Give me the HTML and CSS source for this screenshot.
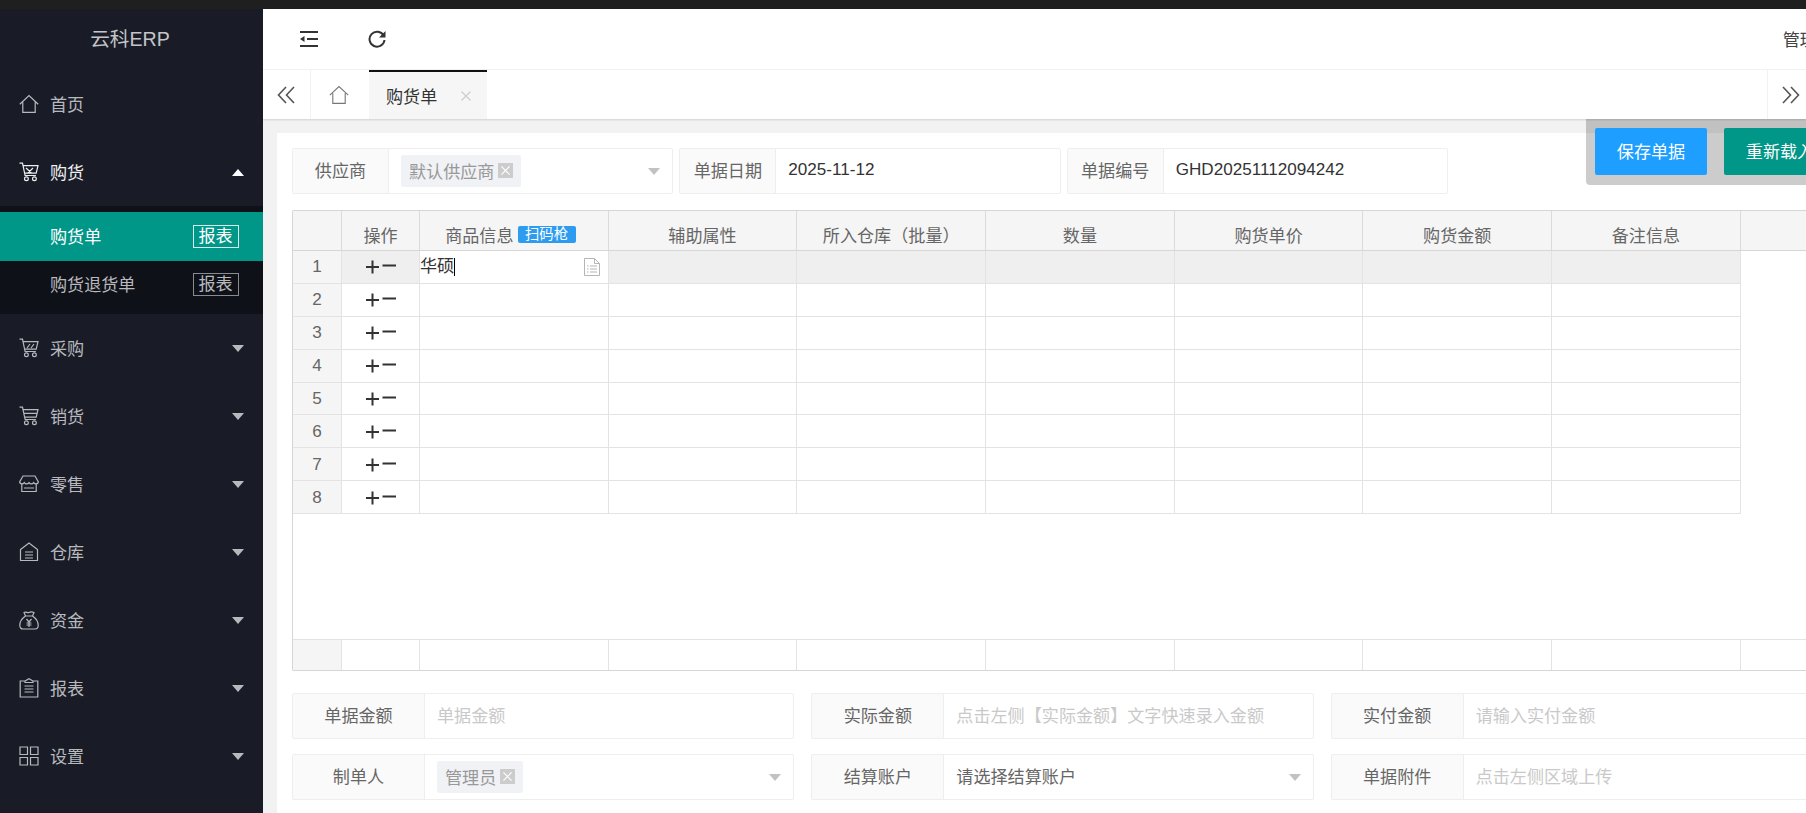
FILE: index.html
```html
<!DOCTYPE html>
<html lang="zh-CN">
<head>
<meta charset="utf-8">
<title>云科ERP</title>
<link rel="stylesheet" href="styles.css">
</head>
<body>
<svg class="sprite" xmlns="http://www.w3.org/2000/svg">
  <symbol id="i-home" viewBox="0 0 20 20"><path d="M.8 10.2 10 1.6l9.2 8.6M3.8 8.2V18.4h3.4M16.2 8.2V18.4h-3.4M7 18.4h6"/></symbol>
  <symbol id="i-cart1" viewBox="0 0 20 20"><path d="M.5 1.2h3l2.6 12.3h10.800M4 3.600h15l-1.800 7.600H5.600M7 6l5.500 5M14 6l-5 5"/><circle cx="7.4" cy="16.8" r="1.9"/><circle cx="15.4" cy="16.8" r="1.9"/></symbol>
  <symbol id="i-cart2" viewBox="0 0 20 20"><path d="M.5 1.2h3l2.6 12.3h10.800M4 3.600h15l-1.800 7.600H5.600M8 10l3-4M12 10l3-4"/><circle cx="7.4" cy="16.8" r="1.9"/><circle cx="15.4" cy="16.8" r="1.9"/></symbol>
  <symbol id="i-cart3" viewBox="0 0 20 20"><path d="M.5 1.2h3l2.6 12.3h10.800M4 3.600h15l-1.800 7.600H5.600M5 7.400h13"/><circle cx="7.4" cy="16.8" r="1.9"/><circle cx="15.4" cy="16.8" r="1.9"/></symbol>
  <symbol id="i-shop" viewBox="0 0 20 20"><path d="M4 2h12l3.400 6c-.6 2.400-3.400 2.400-4.700.6-1.200 1.800-3.500 1.800-4.700 0-1.200 1.800-3.500 1.800-4.700 0C4 10.400 1.200 10.400.6 8zM2.800 10.500V17.500H17.200V10.500M5 14h10"/></symbol>
  <symbol id="i-store" viewBox="0 0 20 20"><path d="M1.500 7.500 10 1l8.500 6.500V18.500H1.500zM6 10h8M6 13h8M6 16h8"/></symbol>
  <symbol id="i-bag" viewBox="0 0 20 20"><path d="M6.500 6 5 2.500c2-1.200 3.500.8 5 0 1.500-.8 3-.8 5 0L13.500 6c3 2 5.700 6 5.700 9.500 0 2-1.200 3.500-3.200 3.500H4c-2 0-3.200-1.500-3.200-3.500C.8 12 3.500 8 6.500 6zM6.500 6h7M7.500 9l2.500 3 2.500-3M10 12v5M7.500 13h5M7.500 15h5"/></symbol>
  <symbol id="i-clip" viewBox="0 0 20 20"><path d="M6 3H1.200V19H18.800V3H14M6 3 10 .8 14 3v1.500H6zM5.500 8h9M5.500 11h9M5.500 14h9"/></symbol>
  <symbol id="i-grid" viewBox="0 0 20 20"><path d="M1 1h7.500v7.500H1zM11.500 1H19v7.500h-7.500zM1 11.500h7.500V19H1zM11.500 11.500H19V19h-7.500z"/></symbol>
  <symbol id="i-plus" viewBox="0 0 30 14"><path d="M0 7h13M6.500 .5v13M16.500 5.500h13.500"/></symbol>
  <symbol id="i-left" viewBox="0 0 18 18"><path d="M9 1 1.500 9 9 17M17 1 9.500 9 17 17"/></symbol>
  <symbol id="i-right" viewBox="0 0 18 18"><path d="M9 1l7.500 8L9 17M1 1l7.500 8L1 17"/></symbol>
  <symbol id="i-close" viewBox="0 0 10 10"><path d="M.5 .5l9 9M9.500 .5l-9 9"/></symbol>
  <symbol id="i-doc" viewBox="0 0 16 18"><path d="M.5 .5h10l5 5v12H.5zM10.500 .5v5h5M3 8h1.500M6 8h7M3 11h1.500M6 11h7M3 14h1.500M6 14h7"/></symbol>
</svg>

<div class="topstrip"></div>
<div class="app">
  <aside class="sidebar">
    <div class="logo">云科ERP</div>
    <nav class="menu">
      <a class="menu-item"><svg class="menu-icon"><use href="#i-home"/></svg><span>首页</span></a>
      <a class="menu-item is-open"><svg class="menu-icon"><use href="#i-cart1"/></svg><span>购货</span><i class="arrow arrow-up"></i></a>
      <div class="submenu">
        <a class="sub-item is-active"><span>购货单</span><b class="sub-badge">报表</b></a>
        <a class="sub-item"><span>购货退货单</span><b class="sub-badge">报表</b></a>
      </div>
      <a class="menu-item"><svg class="menu-icon"><use href="#i-cart2"/></svg><span>采购</span><i class="arrow"></i></a>
      <a class="menu-item"><svg class="menu-icon"><use href="#i-cart3"/></svg><span>销货</span><i class="arrow"></i></a>
      <a class="menu-item"><svg class="menu-icon"><use href="#i-shop"/></svg><span>零售</span><i class="arrow"></i></a>
      <a class="menu-item"><svg class="menu-icon"><use href="#i-store"/></svg><span>仓库</span><i class="arrow"></i></a>
      <a class="menu-item"><svg class="menu-icon"><use href="#i-bag"/></svg><span>资金</span><i class="arrow"></i></a>
      <a class="menu-item"><svg class="menu-icon"><use href="#i-clip"/></svg><span>报表</span><i class="arrow"></i></a>
      <a class="menu-item"><svg class="menu-icon"><use href="#i-grid"/></svg><span>设置</span><i class="arrow"></i></a>
    </nav>
  </aside>

  <main class="main">
    <header class="header">
      <svg class="head-icon" viewBox="0 0 18 16"><path d="M0 1h18M7 8h11M0 15h18"/><path class="fill" d="M4.500 5v6L0 8z"/></svg>
      <svg class="head-icon" viewBox="0 0 18 18"><path d="M15.600 5.500A7.500 7.500 0 1 0 16.500 10"/><path class="fill" d="M17.500 1v6.500H11z"/></svg>
      <span class="user">管理员</span>
    </header>

    <div class="tabs">
      <div class="tab-nav"><svg class="chev"><use href="#i-left"/></svg></div>
      <div class="tab-home"><svg class="tab-home-icon"><use href="#i-home"/></svg></div>
      <div class="tab-active"><span>购货单</span><svg class="tab-close"><use href="#i-close"/></svg></div>
      <div class="tab-nav tab-nav-right"><svg class="chev"><use href="#i-right"/></svg></div>
    </div>

    <div class="content">
      <div class="toolbar">
        <button class="btn btn-blue">保存单据</button>
        <button class="btn btn-teal">重新载入</button>
      </div>

      <section class="card">
        <div class="form-top">
          <div class="field">
            <label class="field-label">供应商</label>
            <div class="field-body body-tag"><span class="tag">默认供应商<i class="tag-x"><svg><use href="#i-close"/></svg></i></span><i class="select-arrow"></i></div>
          </div>
          <div class="field">
            <label class="field-label">单据日期</label>
            <div class="field-body">2025-11-12</div>
          </div>
          <div class="field">
            <label class="field-label">单据编号</label>
            <div class="field-body">GHD20251112094242</div>
          </div>
        </div>

        <div class="grid">
          <div class="row row-head">
            <div class="cell c-num"></div>
            <div class="cell c-op">操作</div>
            <div class="cell c-col cell-scan">商品信息<span class="scan">扫码枪</span></div>
            <div class="cell c-col">辅助属性</div>
            <div class="cell c-col">所入仓库（批量）</div>
            <div class="cell c-col">数量</div>
            <div class="cell c-col">购货单价</div>
            <div class="cell c-col">购货金额</div>
            <div class="cell c-col">备注信息</div>
            <div class="cell c-rest"></div>
          </div>
          <div class="row row-sel">
            <div class="cell c-num">1</div>
            <div class="cell c-op"><svg class="plusminus"><use href="#i-plus"/></svg></div>
            <div class="cell c-col cell-edit"><span class="edit-text">华硕</span><svg class="doc"><use href="#i-doc"/></svg></div>
            <div class="cell c-col"></div><div class="cell c-col"></div><div class="cell c-col"></div><div class="cell c-col"></div><div class="cell c-col"></div><div class="cell c-col"></div>
          </div>
          <div class="row">
            <div class="cell c-num">2</div>
            <div class="cell c-op"><svg class="plusminus"><use href="#i-plus"/></svg></div>
            <div class="cell c-col"></div><div class="cell c-col"></div><div class="cell c-col"></div><div class="cell c-col"></div><div class="cell c-col"></div><div class="cell c-col"></div><div class="cell c-col"></div>
          </div>
          <div class="row">
            <div class="cell c-num">3</div>
            <div class="cell c-op"><svg class="plusminus"><use href="#i-plus"/></svg></div>
            <div class="cell c-col"></div><div class="cell c-col"></div><div class="cell c-col"></div><div class="cell c-col"></div><div class="cell c-col"></div><div class="cell c-col"></div><div class="cell c-col"></div>
          </div>
          <div class="row">
            <div class="cell c-num">4</div>
            <div class="cell c-op"><svg class="plusminus"><use href="#i-plus"/></svg></div>
            <div class="cell c-col"></div><div class="cell c-col"></div><div class="cell c-col"></div><div class="cell c-col"></div><div class="cell c-col"></div><div class="cell c-col"></div><div class="cell c-col"></div>
          </div>
          <div class="row">
            <div class="cell c-num">5</div>
            <div class="cell c-op"><svg class="plusminus"><use href="#i-plus"/></svg></div>
            <div class="cell c-col"></div><div class="cell c-col"></div><div class="cell c-col"></div><div class="cell c-col"></div><div class="cell c-col"></div><div class="cell c-col"></div><div class="cell c-col"></div>
          </div>
          <div class="row">
            <div class="cell c-num">6</div>
            <div class="cell c-op"><svg class="plusminus"><use href="#i-plus"/></svg></div>
            <div class="cell c-col"></div><div class="cell c-col"></div><div class="cell c-col"></div><div class="cell c-col"></div><div class="cell c-col"></div><div class="cell c-col"></div><div class="cell c-col"></div>
          </div>
          <div class="row">
            <div class="cell c-num">7</div>
            <div class="cell c-op"><svg class="plusminus"><use href="#i-plus"/></svg></div>
            <div class="cell c-col"></div><div class="cell c-col"></div><div class="cell c-col"></div><div class="cell c-col"></div><div class="cell c-col"></div><div class="cell c-col"></div><div class="cell c-col"></div>
          </div>
          <div class="row">
            <div class="cell c-num">8</div>
            <div class="cell c-op"><svg class="plusminus"><use href="#i-plus"/></svg></div>
            <div class="cell c-col"></div><div class="cell c-col"></div><div class="cell c-col"></div><div class="cell c-col"></div><div class="cell c-col"></div><div class="cell c-col"></div><div class="cell c-col"></div>
          </div>
          <div class="grid-space"></div>
          <div class="row row-foot">
            <div class="cell c-num"></div>
            <div class="cell c-op"></div>
            <div class="cell c-col"></div><div class="cell c-col"></div><div class="cell c-col"></div><div class="cell c-col"></div><div class="cell c-col"></div><div class="cell c-col"></div><div class="cell c-col"></div>
          </div>
        </div>

        <div class="form-bottom">
          <div class="field">
            <label class="field-label field-label-wide">单据金额</label>
            <div class="field-body placeholder">单据金额</div>
          </div>
          <div class="field">
            <label class="field-label field-label-wide">实际金额</label>
            <div class="field-body placeholder">点击左侧【实际金额】文字快速录入金额</div>
          </div>
          <div class="field">
            <label class="field-label field-label-wide">实付金额</label>
            <div class="field-body placeholder">请输入实付金额</div>
          </div>
          <div class="field">
            <label class="field-label field-label-wide">制单人</label>
            <div class="field-body body-tag"><span class="tag">管理员<i class="tag-x"><svg><use href="#i-close"/></svg></i></span><i class="select-arrow"></i></div>
          </div>
          <div class="field">
            <label class="field-label field-label-wide">结算账户</label>
            <div class="field-body body-muted">请选择结算账户<i class="select-arrow"></i></div>
          </div>
          <div class="field">
            <label class="field-label field-label-wide">单据附件</label>
            <div class="field-body placeholder">点击左侧区域上传</div>
          </div>
        </div>
      </section>
    </div>
  </main>
</div>
</body>
</html>
```

FILE: styles.css
```css
* { box-sizing: border-box; }
html, body { margin: 0; height: 100%; overflow: hidden; }
body {
  font-family: "Liberation Sans", "Noto Sans CJK SC", sans-serif;
  font-size: 17.1px;
  color: #666;
  background: #fff;
  display: flex;
  flex-direction: column;
}
.sprite { position: absolute; width: 0; height: 0; }
svg { fill: none; stroke: currentColor; display: block; }

.topstrip { height: 9px; flex: none; background: #1f1f1f; }
.app { flex: 1; display: flex; min-height: 0; }

/* sidebar */
.sidebar { width: 263px; flex: none; background: #191c27; color: #b8b9bd; overflow: hidden; }
.logo { height: 61px; display: flex; align-items: center; justify-content: center; font-size: 19.6px; color: #c4c5c8; padding: 0 3px 4px 0; }
.menu { display: flex; flex-direction: column; }
.menu-item { height: 68px; flex: none; display: flex; align-items: center; padding: 0 19px; gap: 11px; }
.menu-item span, .sub-item span { padding-bottom: 2px; }
.menu-item.is-open { color: #f0f0f0; }
.menu-icon { width: 20px; height: 20px; stroke-width: 1.2; }
.arrow { margin-left: auto; width: 0; height: 0; border-left: 6.5px solid transparent; border-right: 6.5px solid transparent; border-top: 7px solid #b8b9bd; }
.arrow-up { border-top: 0; border-bottom: 7px solid #fff; }
.submenu { background: #0f1118; padding: 6px 0 5px; display: flex; flex-direction: column; }
.sub-item { height: 48.5px; display: flex; align-items: center; justify-content: space-between; padding: 0 24.5px 0 50px; }
.sub-item.is-active { background: #009688; color: #fff; }
.sub-badge { font-weight: 400; width: 46px; height: 23px; border: 1px solid #8a8b8f; display: flex; align-items: center; justify-content: center; line-height: 1; }
.is-active .sub-badge { border-color: #d8eeeb; }

/* header and tabs */
.main { flex: 1; min-width: 0; display: flex; flex-direction: column; overflow: hidden; }
.header { height: 61px; flex: none; display: flex; align-items: center; gap: 50px; padding-left: 37px; border-bottom: 1px solid #f4f4f4; color: #333; }
.head-icon { width: 18px; height: 18px; stroke-width: 2; }
.head-icon .fill { fill: currentColor; stroke: none; }
.user { margin-left: auto; margin-right: -28px; padding-bottom: 2px; white-space: nowrap; color: #444; }
.tabs { height: 49px; flex: none; display: flex; background: #fff; box-shadow: 0 1px 2px rgba(0,0,0,.14); position: relative; z-index: 1; color: #555; }
.tab-nav { width: 48px; display: flex; align-items: center; justify-content: center; border-right: 1px solid #f2f2f2; padding-right: 1px; }
.tab-nav-right { width: 39px; margin-left: auto; border-right: 0; border-left: 1px solid #f2f2f2; padding: 0 0 0 7px; }
.chev { width: 18px; height: 18px; stroke-width: 1.6; }
.tab-home { width: 58px; display: flex; align-items: center; justify-content: center; padding-right: 2px; color: #777; }
.tab-home-icon { width: 20px; height: 20px; stroke-width: 1.1; }
.tab-active { width: 118px; background: #f6f6f6; border-top: 2px solid #111; display: flex; align-items: center; padding-left: 17px; color: #333; gap: 24px; }
.tab-close { width: 10px; height: 10px; color: #ccc; stroke-width: 1.1; }

/* content */
.content { flex: 1; min-height: 0; position: relative; background: #f2f2f2; padding: 14px 0 0 14px; }
.toolbar { position: absolute; z-index: 2; top: 0; left: 1323px; width: 400px; display: flex; gap: 17px; padding: 9px; height: 66px; background: rgba(0,0,0,.2); border-radius: 0 0 0 4px; }
.btn { width: 112px; height: 47px; border: 0; border-radius: 2px; color: #fff; font: inherit; padding: 0 0 2px; flex: none; }
.btn-blue { background: #1e9fff; }
.btn-teal { background: #009688; }
.card { width: 1700px; height: 100%; background: #fff; padding: 15px; }

/* fields */
.form-top { width: 1156px; display: flex; gap: 6px; }
.form-top .field { flex: 1; }
.form-bottom { width: 1541px; margin-top: 22px; display: grid; grid-template-columns: repeat(3, 1fr); gap: 15px 17px; }
.field { height: 46px; display: flex; border: 1px solid #eee; border-radius: 2px; min-width: 0; }
.field-label { width: 96px; flex: none; background: #fafafa; border-right: 1px solid #eee; display: flex; align-items: center; justify-content: center; padding-bottom: 3px; }
.field-label-wide { width: 132px; }
.field-body { flex: 1; display: flex; align-items: center; padding: 0 12px 3px; color: #333; position: relative; min-width: 0; white-space: nowrap; }
.body-tag { padding-bottom: 0; }
.placeholder { color: #c9c9c9; }
.body-muted { color: #666; }
.tag { height: 32px; background: #f0f2f5; color: #999; border-radius: 2px; display: inline-flex; align-items: center; padding: 0 8px 2px; gap: 4px; }
.tag-x { width: 15px; height: 15px; background: #ccc; color: #fff; display: flex; align-items: center; justify-content: center; }
.tag-x svg { width: 9px; height: 9px; stroke-width: 1.3; }
.select-arrow { position: absolute; right: 12px; top: 19px; width: 0; height: 0; border-left: 6.5px solid transparent; border-right: 6.5px solid transparent; border-top: 7px solid #c2c2c2; }

/* data grid */
.grid { width: 1700px; height: 461px; margin-top: 16px; border: 1px solid #d6d6d6; border-right: 0; border-radius: 2px 0 0 2px; display: flex; flex-direction: column; overflow: hidden; }
.row { display: flex; height: 32.9px; flex: none; }
.row-head { height: 40px; background: #f5f5f5; border-bottom: 1px solid #d6d6d6; }
.row-foot { height: 31px; border-top: 1px solid #e3e3e3; }
.grid-space { flex: 1; }
.cell { display: flex; align-items: center; justify-content: center; border-right: 1px solid #e3e3e3; border-bottom: 1px solid #e3e3e3; flex: none; white-space: nowrap; padding-top: 1px; }
.row-head .cell { border-bottom: 0; border-right-color: #dadada; padding-top: 8px; }
.row-foot .cell { border-bottom: 0; }
.c-num { width: 49px; background: #f5f5f5; }
.c-op { width: 78px; }
.c-col { width: 188.7px; }
.row-head .cell-scan { padding-right: 7px; }
.c-rest { flex: 1; border-right: 0; }
.row-sel .cell { background: #efefef; }
.row-sel .c-num { background: #f5f5f5; }
.row-sel .cell-edit { background: #fff; justify-content: space-between; padding: 1px 8px 0 0; color: #333; }
.edit-text { border-right: 1px solid #000; line-height: 18px; height: 18px; }
.doc { width: 16px; height: 18px; color: #b5b5b5; stroke-width: 1; }
.plusminus { width: 30px; height: 14px; color: #333; stroke-width: 2; }
.scan { margin-left: 4px; width: 58px; height: 17px; background: #2d9cf0; color: #fff; font-size: 14.4px; line-height: 17px; text-align: center; border-radius: 2px; }
```
